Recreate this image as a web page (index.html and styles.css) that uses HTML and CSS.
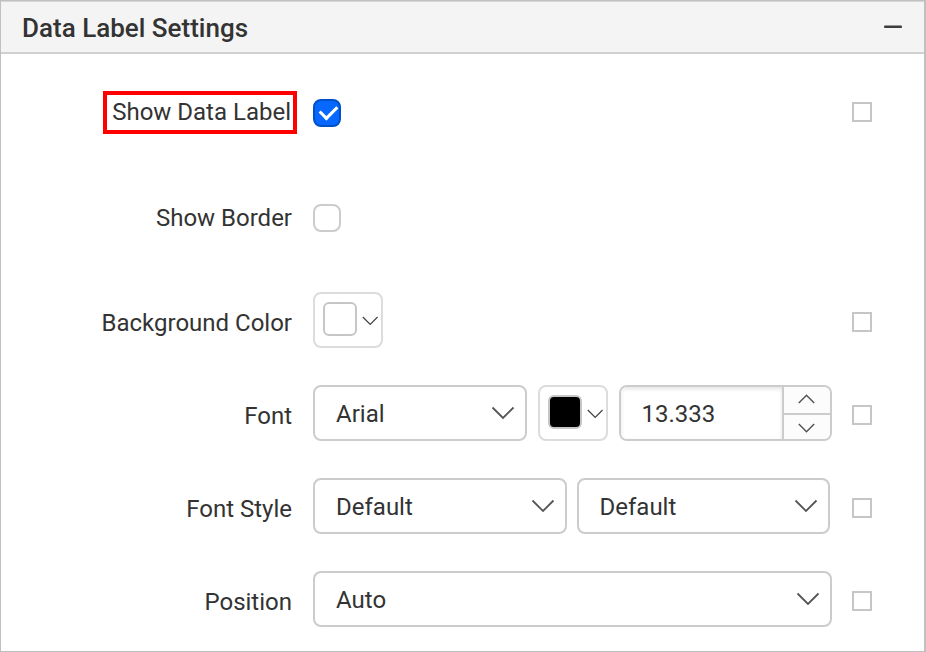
FILE: index.html
```html
<!DOCTYPE html>
<html lang="en">
<head>
<meta charset="utf-8">
<title>Data Label Settings</title>
<link rel="stylesheet" href="styles.css">
</head>
<body>
<section class="panel">
  <header class="panel-header">
    <h2 class="panel-title">Data Label Settings</h2>
    <button class="collapse" type="button" aria-label="Collapse">
      <svg width="18" height="4" viewBox="0 0 18 4"><rect y="0.5" width="18" height="2.5" rx="1" fill="#3c3c3e"/></svg>
    </button>
  </header>
  <form class="panel-body">
    <div class="row row-check">
      <label class="label" for="show-label"><span class="highlight">Show Data Label</span></label>
      <div class="controls"><input class="check" id="show-label" type="checkbox" checked></div>
      <input class="advanced" type="checkbox" aria-label="Show Data Label expression">
    </div>
    <div class="row row-check">
      <label class="label" for="show-border">Show Border</label>
      <div class="controls"><input class="check" id="show-border" type="checkbox"></div>
    </div>
    <div class="row">
      <label class="label" for="background">Background Color</label>
      <div class="controls">
        <button class="picker" id="background" type="button">
          <span class="swatch"></span>
          <svg class="picker-arrow" width="16" height="10" viewBox="0 0 16 10"><path d="M0.8 1l7.4 7.4L15.6 1"/></svg>
        </button>
      </div>
      <input class="advanced" type="checkbox" aria-label="Background Color expression">
    </div>
    <div class="row">
      <label class="label" for="font">Font</label>
      <div class="controls controls-font">
        <div class="dropdown">
          <select id="font"><option>Arial</option></select>
          <svg class="arrow" width="24" height="14" viewBox="0 0 24 14"><path d="M1.5 1.5L12 12L22.5 1.5"/></svg>
        </div>
        <button class="picker" type="button" aria-label="Font color">
          <span class="swatch swatch-black"></span>
          <svg class="picker-arrow" width="16" height="10" viewBox="0 0 16 10"><path d="M0.8 1l7.4 7.4L15.6 1"/></svg>
        </button>
        <div class="spinner">
          <input class="spinner-input" type="text" value="13.333" aria-label="Font size">
          <div class="spinner-buttons">
            <button type="button" aria-label="Increase"><svg width="18" height="12" viewBox="0 0 18 12"><path d="M0.8 9l7.7-7.7L16.2 9"/></svg></button>
            <button type="button" aria-label="Decrease"><svg width="18" height="12" viewBox="0 0 18 12"><path d="M0.8 3l7.7 7.7L16.2 3"/></svg></button>
          </div>
        </div>
      </div>
      <input class="advanced" type="checkbox" aria-label="Font expression">
    </div>
    <div class="row">
      <label class="label" for="font-style">Font Style</label>
      <div class="controls controls-pair">
        <div class="dropdown">
          <select id="font-style"><option>Default</option></select>
          <svg class="arrow" width="24" height="14" viewBox="0 0 24 14"><path d="M1.5 1.5L12 12L22.5 1.5"/></svg>
        </div>
        <div class="dropdown">
          <select aria-label="Font weight"><option>Default</option></select>
          <svg class="arrow" width="24" height="14" viewBox="0 0 24 14"><path d="M1.5 1.5L12 12L22.5 1.5"/></svg>
        </div>
      </div>
      <input class="advanced" type="checkbox" aria-label="Font Style expression">
    </div>
    <div class="row">
      <label class="label" for="position">Position</label>
      <div class="controls">
        <div class="dropdown">
          <select id="position"><option>Auto</option></select>
          <svg class="arrow" width="24" height="14" viewBox="0 0 24 14"><path d="M1.5 1.5L12 12L22.5 1.5"/></svg>
        </div>
      </div>
      <input class="advanced" type="checkbox" aria-label="Position expression">
    </div>
  </form>
</section>
</body>
</html>
```
FILE: styles.css
```css
* {
  box-sizing: border-box;
}

body {
  margin: 0;
  background: #fff;
  color: #333;
  font: 24px/36px Roboto, "Liberation Sans", sans-serif;
}

input,
select,
button {
  margin: 0;
  font: inherit;
  color: inherit;
}

button {
  padding: 0;
  border: 0;
  background: none;
}

svg {
  display: block;
  fill: none;
  stroke: #555;
}

.panel {
  min-height: 100vh;
  border: 1px solid #c0c0c0;
  border-right-width: 2px;
}

.panel-header {
  display: flex;
  align-items: center;
  justify-content: space-between;
  height: 53px;
  padding: 0 22px 0 21px;
  background: #f4f4f4;
  border-top: 1px solid #d6d6d6;
  border-bottom: 2px solid #d0d0d0;
}

.panel-title {
  margin: 0;
  padding-top: 2px;
  font-size: 26px;
  font-weight: 500;
}

.collapse svg {
  stroke: none;
}

.panel-body {
  display: flex;
  flex-direction: column;
  gap: 37px;
  padding: 28px 52px 24px 0;
}

.row {
  display: grid;
  grid-template-columns: minmax(0, 292fr) minmax(0, 519fr) 20px;
  column-gap: 20px;
  align-items: center;
  min-height: 56px;
}

.row-check {
  padding: 3px 0 9px;
  min-height: 68px;
}

.label {
  padding: 6px 1px 0 0;
  text-align: right;
}

.row-check .label {
  padding-top: 0;
}

.highlight {
  display: inline-block;
  margin-right: -1px;
  padding: 0 2px 0 5px;
  line-height: 35px;
  vertical-align: top;
  outline: 4px solid #f00;
}

.controls {
  display: flex;
  gap: 11px;
}

.controls-font {
  display: grid;
  grid-template-columns: minmax(0, 1fr) 70px minmax(0, 1fr);
}

.controls-pair {
  gap: 10px;
  padding-right: 2px;
}

.check {
  appearance: none;
  width: 28px;
  height: 28px;
  border: 2px solid #ccc;
  border-radius: 8px;
  background: #fff;
}

.check:checked {
  border-color: #0050c8;
  background: #0668ff;
}

.check:checked::before {
  content: "";
  display: block;
  width: 8px;
  height: 14px;
  margin: 1px 0 0 8px;
  border: solid #fff;
  border-width: 0 3px 3px 0;
  transform: rotate(45deg);
}

.advanced {
  appearance: none;
  width: 20px;
  height: 20px;
  margin-top: 4px;
  border: 2px solid #c6c6c6;
  background: #fff;
}

.row-check .advanced {
  margin: 0 0 2px;
}

.picker {
  display: flex;
  flex: none;
  align-items: flex-start;
  gap: 5px;
  width: 70px;
  height: 56px;
  padding: 8px 0 0 8px;
  border: 2px solid #dcdcdc;
  border-radius: 8px;
}

.swatch {
  width: 34px;
  height: 34px;
  border: 2px solid #c6c6c6;
  border-radius: 6px;
  background: #fff;
}

.swatch-black {
  background: #000;
}

.picker-arrow {
  margin-top: 14px;
  stroke: #444;
  stroke-width: 1.3;
}

.dropdown {
  flex: 1;
  display: grid;
  align-items: center;
  min-width: 0;
}

.dropdown > * {
  grid-area: 1 / 1;
}

.dropdown select {
  appearance: none;
  width: 100%;
  height: 56px;
  padding: 2px 48px 0 21px;
  border: 2px solid #ccc;
  border-radius: 8px;
  background: #fff;
}

.arrow {
  justify-self: end;
  margin-right: 12px;
  pointer-events: none;
  stroke-width: 1.8;
}

.spinner {
  display: flex;
  height: 56px;
  border: 2px solid #ccc;
  border-radius: 8px;
  overflow: hidden;
}

.spinner-input {
  flex: 1;
  min-width: 0;
  padding: 2px 0 0 21px;
  border: 0;
  background: #fff;
  box-shadow: inset 0 2px 4px #e4e4e4;
}

.spinner-buttons {
  display: grid;
  grid-template-rows: 1fr 1fr;
  width: 48px;
  border-left: 2px solid #ccc;
  background: #fcfcfc;
}

.spinner-buttons button {
  display: grid;
  place-items: center;
}

.spinner-buttons button + button {
  border-top: 2px solid #ccc;
}

.spinner-buttons svg {
  stroke-width: 1.5;
}
```
